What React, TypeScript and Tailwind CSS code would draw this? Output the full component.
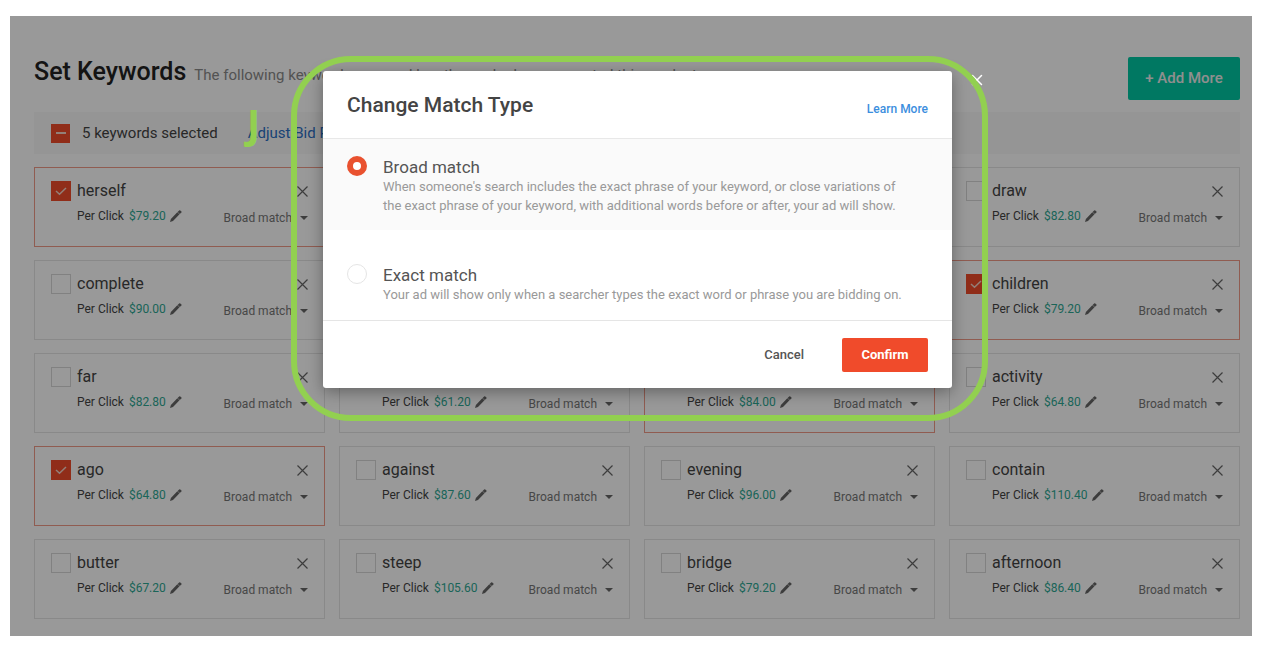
import { X } from 'lucide-react';

interface Keyword {
  name: string;
  bid: string;
  selected?: boolean;
}

// null keeps a grid slot that sits completely behind the dialog
const keywords: (Keyword | null)[] = [
  { name: 'herself', bid: '$79.20', selected: true },
  null,
  null,
  { name: 'draw', bid: '$82.80' },
  { name: 'complete', bid: '$90.00' },
  null,
  null,
  { name: 'children', bid: '$79.20', selected: true },
  { name: 'far', bid: '$82.80' },
  { name: '', bid: '$61.20' },
  { name: '', bid: '$84.00', selected: true },
  { name: 'activity', bid: '$64.80' },
  { name: 'ago', bid: '$64.80', selected: true },
  { name: 'against', bid: '$87.60' },
  { name: 'evening', bid: '$96.00' },
  { name: 'contain', bid: '$110.40' },
  { name: 'butter', bid: '$67.20' },
  { name: 'steep', bid: '$105.60' },
  { name: 'bridge', bid: '$79.20' },
  { name: 'afternoon', bid: '$86.40' },
];

function PencilIcon() {
  return (
    <svg viewBox="0 0 12 12" className="h-3 w-3 fill-[#666666]">
      <path d="M0 12 L0.9 8.9 L7.3 2.2 L9.5 4.3 L3 10.9 Z M7.6 1.9 L9.1 0.4 Q9.7 -0.1 10.3 0.4 L11.4 1.4 Q12 2 11.4 2.6 L9.8 4.1 Z" />
    </svg>
  );
}

function KeywordCard({ keyword, id }: { keyword: Keyword; id: string }) {
  return (
    <li
      className={
        keyword.selected
          ? 'h-20 border border-[#f09a88] px-4 pt-[11px]'
          : 'h-20 border border-[#e4e4e4] px-4 pt-[11px]'
      }
    >
      <div className="flex h-6 items-center">
        <span className="relative flex h-5 w-5 shrink-0">
          <input
            id={id}
            type="checkbox"
            aria-label={keyword.name || 'keyword'}
            defaultChecked={keyword.selected}
            className="peer h-5 w-5 appearance-none border border-[#d8d8d8] checked:border-[#f04b2b] checked:bg-[#f04b2b]"
          />
          <svg
            viewBox="0 0 20 20"
            className="pointer-events-none absolute inset-0 hidden h-5 w-5 fill-none stroke-[#f5d5c8] stroke-[1.5] peer-checked:block"
          >
            <path d="M5 10 L8.5 13.2 L15 7" />
          </svg>
        </span>
        <label htmlFor={id} className="ml-1.5 flex-1 text-base leading-5 text-[#444444]">
          {keyword.name}
        </label>
        <button type="button" aria-label="Remove keyword">
          <svg viewBox="0 0 11 11" className="h-[11px] w-[11px] fill-none stroke-[#666666]">
            <path d="M0.5 0.5 L10.5 10.5 M10.5 0.5 L0.5 10.5" strokeWidth={1.2} />
          </svg>
        </button>
      </div>
      <div className="flex items-center justify-between pt-px pl-[26px] text-xs leading-5">
        <p className="flex items-center gap-1 text-[#444444]">
          <span>
            Per Click <span className="ml-0.5 text-[#2ea893]">{keyword.bid}</span>
          </span>
          <button type="button" aria-label="Edit bid">
            <PencilIcon />
          </button>
        </p>
        <button type="button" className="flex items-center gap-2 pt-1 text-[#777777]">
          Broad match
          <svg viewBox="0 0 8 4" className="h-1 w-2 fill-[#666666]">
            <path d="M0 0 H8 L4 4 Z" />
          </svg>
        </button>
      </div>
    </li>
  );
}

function MatchTypeDialog() {
  return (
    <div
      role="dialog"
      aria-labelledby="dialog-title"
      className="rounded-[3px] bg-white shadow-[0_4px_16px_rgba(0,0,0,0.35)]"
    >
      <header className="flex h-[68px] items-center justify-between border-b border-[#e8e8e8] px-6">
        <h2 id="dialog-title" className="pt-0.5 text-[21px] font-medium text-[#444444]">
          Change Match Type
        </h2>
        <a href="#learn" className="pt-2 text-xs font-medium text-[#3b8ede]">
          Learn More
        </a>
      </header>

      <div className="flex h-[91px] items-start gap-4 bg-[#fafafa] pt-[17px] pr-10 pl-6">
        <input
          id="broad"
          type="radio"
          name="match"
          defaultChecked
          className="h-5 w-5 shrink-0 appearance-none rounded-full border border-[#e5e5e5] bg-white checked:border-[6px] checked:border-[#e9512f]"
        />
        <label htmlFor="broad" className="pt-px text-[13px] text-[#999999]">
          <span className="block text-[17px] leading-5 text-[#555555]">Broad match</span>
          <span className="block leading-[19px]">
            When someone's search includes the exact phrase of your keyword, or close variations of
            the exact phrase of your keyword, with additional words before or after, your ad will
            show.
          </span>
        </label>
      </div>

      <div className="flex h-[90px] items-start gap-4 pt-[34px] pr-10 pl-6">
        <input
          id="exact"
          type="radio"
          name="match"
          className="h-5 w-5 shrink-0 appearance-none rounded-full border border-[#e5e5e5] bg-white checked:border-[6px] checked:border-[#e9512f]"
        />
        <label htmlFor="exact" className="pt-px text-[13px] text-[#999999]">
          <span className="block text-[17px] leading-5 text-[#555555]">Exact match</span>
          <span className="block leading-[19px]">
            Your ad will show only when a searcher types the exact word or phrase you are bidding on.
          </span>
        </label>
      </div>

      <footer className="flex h-[68px] items-center justify-end gap-[38px] border-t border-[#e5e5e5] px-6">
        <button type="button" className="text-[13px] font-medium text-[#555555]">
          Cancel
        </button>
        <button
          type="button"
          className="h-[34px] w-[86px] rounded-[2px] bg-[#f04b2b] text-[13px] font-bold text-white"
        >
          Confirm
        </button>
      </footer>
    </div>
  );
}

export default function App() {
  return (
    <div className="bg-white pt-4 pr-3.5 pb-4 pl-2.5 font-[Roboto,sans-serif]">
      <div className="relative">
        <main className="bg-white pt-10 pr-3 pb-[17px] pl-6">
          <header className="flex items-center justify-between">
            <div className="flex items-baseline gap-2 pb-3 whitespace-nowrap">
              <h1 className="text-[25px] leading-8 font-medium text-[#222222]">Set Keywords</h1>
              <p className="text-[15px] text-[#8a8a8a]">
                The following keywords are used by others who have promoted this product.
              </p>
            </div>
            <button
              type="button"
              className="h-[43px] w-28 rounded-[2px] bg-[#00c9a3] text-[15px] font-medium text-[#eeeeee]"
            >
              + Add More
            </button>
          </header>

          <div className="mt-3 flex h-[42px] items-center bg-[#f9f9f9] pl-[17px] text-[15px]">
            <button
              type="button"
              aria-label="Deselect all"
              className="flex h-[19px] w-[19px] items-center justify-center bg-[#f04b2b]"
            >
              <span className="h-0.5 w-2.5 bg-[#f5d5c8]" />
            </button>
            <span className="ml-3 text-[#444444]">5 keywords selected</span>
            <a href="#bid" className="ml-[30px] text-[#2c6fc4]">
              Adjust Bid Price
            </a>
          </div>

          <ul className="mt-[13px] grid grid-cols-4 gap-x-3.5 gap-y-[13px]">
            {keywords.map((keyword, i) =>
              keyword ? (
                <KeywordCard key={i} keyword={keyword} id={`keyword-${i}`} />
              ) : (
                <li key={i} aria-hidden="true" />
              ),
            )}
          </ul>
        </main>

        {/* Backdrop and dialog */}
        <div className="absolute inset-0 flex justify-center bg-black/40 pt-[55px] pl-[13px]">
          <div className="relative h-fit w-[629px]">
            <MatchTypeDialog />
            <button type="button" aria-label="Close" className="absolute top-0 -right-[34px]">
              <X className="h-[18px] w-[18px] text-white" strokeWidth={2} />
            </button>
            {/* Green callout around the dialog */}
            <div className="pointer-events-none absolute -top-[15px] -right-9 -bottom-[33px] -left-8 rounded-[60px] border-[6px] border-[#92d050]" />
            <span className="pointer-events-none absolute top-8 -left-[76px] font-['Open_Sans',sans-serif] text-[40px] leading-none font-bold text-[#92d050]">
              J
            </span>
          </div>
        </div>
      </div>
    </div>
  );
}
